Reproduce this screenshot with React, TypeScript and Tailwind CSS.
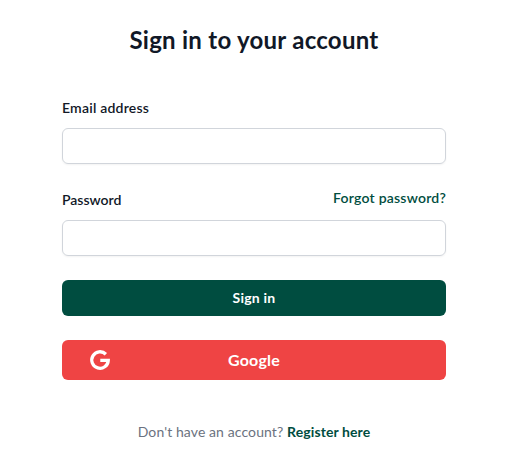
export default function App() {
  return (
    <div className="w-[507px] h-[475px] bg-white pl-[62px] font-['Lato','Noto_Sans',sans-serif]">
      <div className="w-[384px]">
        <h2 className="pt-6 text-center text-2xl leading-8 font-bold tracking-[0.27px] text-[#111827]">Sign in to your account</h2>
        <form className="mt-10 flex flex-col">
          <label className="text-sm font-semibold leading-6 tracking-[0.22px] text-[#111827]">Email address</label>
          <input className="mt-2 h-9 rounded-md border border-[#d1d5db] shadow-xs" />
          <div className="mt-6 flex justify-between items-center h-6">
            <label className="text-sm font-semibold text-[#111827]">Password</label>
            <a className="text-sm font-semibold tracking-[0.22px] text-[#004d40] mb-[4px]">Forgot password?</a>
          </div>
          <input className="mt-2 h-9 rounded-md border border-[#d1d5db] shadow-xs" />
          <button type="button" className="mt-6 h-9 rounded-md bg-[#004d40] text-sm font-bold tracking-[0.22px] text-white">Sign in</button>
          <button type="button" className="mt-6 h-10 rounded-md bg-[#ef4444] font-bold tracking-[0.2px] text-white relative flex items-center justify-center">
            <svg className="absolute left-[27px]" width="22" height="22" viewBox="0 0 24 24" fill="none" stroke="white" strokeWidth="3.6"><path d="M12.3 12.4h8.7a9 9 0 1 1-2.6-6.7" /></svg>
            Google
          </button>
        </form>
        <p className="mt-[42px] text-center text-sm tracking-[0.1px] text-[#6b7280]">Don't have an account? <a className="font-bold text-[#004d40]">Register here</a></p>
      </div>
    </div>
  );
}
